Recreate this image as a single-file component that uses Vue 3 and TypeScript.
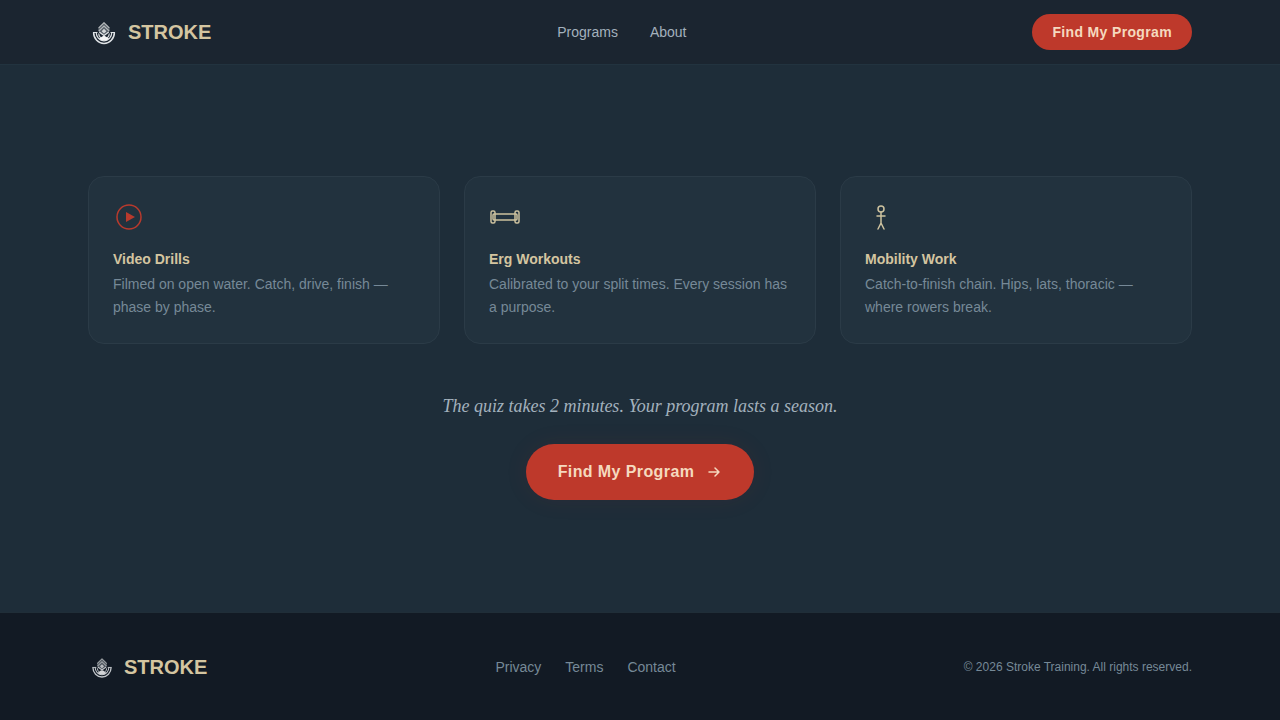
<script setup lang="ts">
interface Feature {
  icon: 'play' | 'erg' | 'body'
  title: string
  text: string
}

const features: Feature[] = [
  { icon: 'play', title: 'Video Drills', text: 'Filmed on open water. Catch, drive, finish — phase by phase.' },
  { icon: 'erg', title: 'Erg Workouts', text: 'Calibrated to your split times. Every session has a purpose.' },
  { icon: 'body', title: 'Mobility Work', text: 'Catch-to-finish chain. Hips, lats, thoracic — where rowers break.' },
]
const navLinks: string[] = ['Programs', 'About']
const footerLinks: string[] = ['Privacy', 'Terms', 'Contact']
</script>

<template>
  <div class="page">
    <svg class="defs" width="0" height="0" aria-hidden="true">
      <symbol id="stroke-mark" viewBox="0 0 32 32">
        <path d="M16 6c2 2.4 5.8 4 5.8 7.500 0 2.500-2.200 4.500-5.800 6.500-3.600-2-5.800-4-5.800-6.500C10.200 10 14 8.400 16 6Z" fill="#555e67" />
        <g fill="none" stroke="#dfe3e6">
          <path d="M5.600 16.500a10.400 10.900 0 0 0 20.800 0" stroke-width="1.500" />
          <path d="M8.200 16.500a7.800 8.300 0 0 0 15.600 0" stroke-width="1.200" />
          <path d="M10.700 17.500a5.300 5.400 0 0 0 10.600 0" stroke-width="1.100" />
          <path d="M5 16.500h4.500M22.500 16.500H27" stroke-width="1.100" />
        </g>
        <path d="M10.800 22.500C13 22.300 14 19.800 16 19.800s3 2.500 5.200 2.700C19 25.200 13 25.200 10.800 22.500Z" fill="#f4f5f6" />
        <g fill="none" stroke="#b4b8ba" stroke-width="1.200">
          <path d="M10.600 12.200 16 6.800l5.400 5.400" />
          <path d="m10.800 15 5.200-5 5.200 5" />
          <path d="m11.300 16 4.700 3.400 4.700-3.400" stroke="#e0e3e5" />
        </g>
        <path d="m16 12.800 2.400 2.400-2.400 2.400-2.400-2.400Z" fill="#d5d8da" />
      </symbol>
    </svg>

    <header class="header">
      <div class="container bar">
        <a class="brand" href="#">
          <svg class="mark" aria-hidden="true"><use href="#stroke-mark" /></svg>
          <span>STROKE</span>
        </a>
        <nav class="nav" aria-label="Main">
          <a v-for="link in navLinks" :key="link" href="#">{{ link }}</a>
        </nav>
        <button class="cta small" type="button">Find My Program</button>
      </div>
    </header>

    <main class="container main">
      <div class="cards">
        <article v-for="f in features" :key="f.title" class="card">
          <svg v-if="f.icon === 'play'" class="icon play" viewBox="0 0 32 32" aria-hidden="true">
            <circle cx="16" cy="16" r="12" fill="none" stroke="currentColor" stroke-width="1.5" />
            <path d="M13 11v10l9-5Z" fill="currentColor" />
          </svg>
          <svg v-else-if="f.icon === 'erg'" class="icon" viewBox="0 0 32 32" fill="none" stroke="currentColor" stroke-width="1.5" aria-hidden="true">
            <rect x="4" y="13" width="24" height="6" rx="1" />
            <rect x="2" y="10" width="4" height="12" rx="1.5" />
            <rect x="26" y="10" width="4" height="12" rx="1.5" />
          </svg>
          <svg v-else class="icon" viewBox="0 0 32 32" fill="none" stroke="currentColor" stroke-width="1.5" stroke-linecap="round" aria-hidden="true">
            <circle cx="16" cy="8" r="3" />
            <path d="M16 11v11M12 15h8M16 22l-3 6M16 22l3 6" />
          </svg>
          <h3>{{ f.title }}</h3>
          <p>{{ f.text }}</p>
        </article>
      </div>
      <p class="quote">The quiz takes 2 minutes. Your program lasts a season.</p>
      <button class="cta large" type="button">
        Find My Program
        <svg width="16" height="16" viewBox="0 0 16 16" fill="none" stroke="currentColor" stroke-width="1.5" stroke-linecap="round" stroke-linejoin="round" aria-hidden="true">
          <path d="M3 8h10M9 4l4 4-4 4" />
        </svg>
      </button>
    </main>

    <footer class="footer">
      <div class="container foot">
        <a class="brand" href="#">
          <svg class="mark foot-mark" aria-hidden="true"><use href="#stroke-mark" /></svg>
          <span>STROKE</span>
        </a>
        <nav class="foot-nav" aria-label="Footer">
          <a v-for="link in footerLinks" :key="link" href="#">{{ link }}</a>
        </nav>
        <p class="legal">© 2026 Stroke Training. All rights reserved.</p>
      </div>
    </footer>
  </div>
</template>

<style>
body {
  margin: 0;
  background: #121a24;
}
</style>

<style scoped>
.page {
  display: flex;
  flex-direction: column;
  min-height: 100vh;
  background: #1e2d39;
  color: #8a9ba8;
  font-family: "Liberation Sans", Arial, sans-serif;
  font-size: 14px;
  line-height: 20px;
}
.defs {
  position: absolute;
}
a {
  color: inherit;
  text-decoration: none;
}
h3,
p {
  margin: 0;
}
.container {
  box-sizing: border-box;
  width: 100%;
  max-width: 1152px;
  margin: 0 auto;
  padding: 0 24px;
}
.header {
  background: #1b2530;
  box-shadow: 0 1px 0 #22333f;
}
.bar,
.foot {
  display: flex;
  align-items: center;
  justify-content: space-between;
}
.bar {
  height: 64px;
}
.brand {
  display: flex;
  align-items: center;
  gap: 8px;
  color: #d4c5a0;
  font-size: 20px;
  font-weight: 700;
  line-height: 28px;
}
.mark {
  width: 32px;
  height: 32px;
}
.foot-mark {
  width: 28px;
  height: 28px;
  opacity: 0.85;
}
.nav {
  display: flex;
  gap: 32px;
  color: #a3b1bd;
}
.cta {
  display: inline-flex;
  align-items: center;
  border: 0;
  border-radius: 999px;
  background: #be392b;
  color: #f5d9bf;
  font-family: inherit;
  font-weight: 700;
  letter-spacing: 0.025em;
  cursor: pointer;
}
.small {
  padding: 8px 20px;
  font-size: 14px;
  line-height: 20px;
}
.large {
  gap: 12px;
  padding: 16px 32px;
  font-size: 16px;
  line-height: 24px;
  box-shadow: 0 0 24px rgba(192, 57, 43, 0.08);
}
.main {
  display: flex;
  flex-direction: column;
  align-items: center;
  padding-top: 112px;
  padding-bottom: 112px;
}
.cards {
  display: grid;
  grid-template-columns: repeat(3, 1fr);
  gap: 24px;
  width: 100%;
}
.card {
  padding: 24px;
  border: 1px solid #2b3b47;
  border-radius: 16px;
  background: #22323e;
}
.icon {
  display: block;
  width: 32px;
  height: 32px;
  margin-bottom: 16px;
  color: #cdc29f;
}
.play {
  color: #b83a2d;
}
.card h3 {
  margin-bottom: 4px;
  color: #d4c5a0;
  font-size: 14px;
  line-height: 20px;
}
.card p {
  color: #768997;
  line-height: 23px;
}
.quote {
  margin: 48px 0 24px;
  color: #a3b1bd;
  font-family: "Liberation Serif", "Times New Roman", serif;
  font-size: 18px;
  font-style: italic;
  line-height: 28px;
}
.footer {
  flex: 1;
  padding: 40px 0 32px;
  border-top: 1px solid #202e38;
  background: #121a24;
}
.foot-nav {
  display: flex;
  gap: 24px;
  color: #768997;
}
.legal {
  color: #768997;
  font-size: 12px;
  line-height: 16px;
}
</style>
